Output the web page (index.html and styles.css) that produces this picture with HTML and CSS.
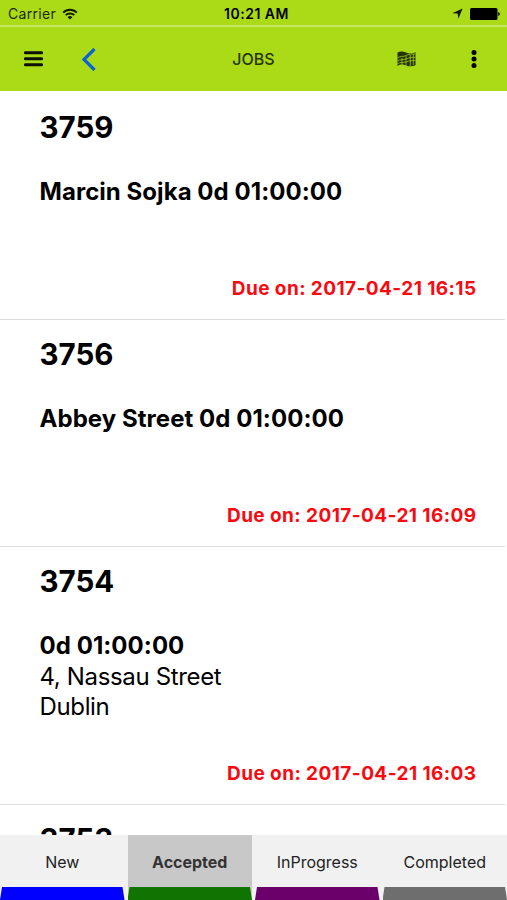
FILE: index.html
```html
<!DOCTYPE html>
<html lang="en">
<head>
    <meta charset="UTF-8">
    <meta name="viewport" content="width=device-width, initial-scale=1.0">
    <title>Jobs</title>
    <link rel="stylesheet" href="styles.css">
</head>
<body>
    <div class="statusBar">
        <div class="carrier">
            <span>Carrier</span>
            <svg width="16" height="12" viewBox="0 0 16 12" fill="none" stroke="#101800" stroke-width="1.9">
                <path d="M1.2 4.6a9.6 9.6 0 0 1 13.6 0M3.7 7.2a6.1 6.1 0 0 1 8.6 0"/>
                <path d="M8 11.6L5.6 9.2a3.4 3.4 0 0 1 4.8 0z" fill="#101800" stroke="none"/>
            </svg>
        </div>
        <span class="time">10:21 AM</span>
        <div class="battery">
            <svg width="11" height="11" viewBox="0 0 11 11"><path d="M10.6.4L6.4 10.7 5.6 5.6.3 5.3z" fill="#101800"/></svg>
            <svg width="30" height="12" viewBox="0 0 30 12"><rect width="27.5" height="12" rx="1.5"/><path d="M28.2 4q1.6.5 1.6 2t-1.6 2z"/></svg>
        </div>
    </div>
    <header class="header">
        <svg class="menuIcon" width="19" height="16" viewBox="0 0 19 16"><path d="M1.3 1.8h16.4M1.3 7.8h16.4M1.3 13.8h16.4" stroke="#0c1200" stroke-width="2.9" stroke-linecap="round"/></svg>
        <svg class="backIcon" width="16" height="24" viewBox="0 0 16 24"><path d="M13.5 2L3 12.5 13.5 23" fill="none" stroke="#0a63d6" stroke-width="3.2"/></svg>
        <h1 class="title">JOBS</h1>
        <svg class="mapIcon" width="19" height="16" viewBox="0 0 19 16">
            <path d="M.5 1.6C3 .2 6 .2 9 1.6s6.2 1.4 9.5-.4v13c-3.2 1.5-6.5 1.5-9.5.2s-6-1.3-8.500.6z" fill="#27350a"/>
            <path d="M.5 6.8c3-1.800 5.500-.8 8.500-2.300S14.500 3.200 18.500 3M.5 9.800c3-1.600 5.500-.6 9-2s5-1.600 9-1.400M.5 12.600c3-1.700 5.500-.6 9-1.800s5-1.400 9-1.200M5 7v7M9 5v10M13.300 4v11M16.300 3v11" fill="none" stroke="#aadb16" stroke-width=".7"/>
        </svg>
        <svg class="moreIcon" width="6" height="18" viewBox="0 0 6 18"><circle cx="3" cy="2.6" r="2.5"/><circle cx="3" cy="9" r="2.5"/><circle cx="3" cy="15.4" r="2.5"/></svg>
    </header>
    <main class="jobList">
        <section class="job">
            <h2 class="jobNum">3759</h2>
            <div class="detail"><b>Marcin Sojka 0d 01:00:00</b></div>
            <p class="due">Due on: 2017-04-21 16:15</p>
        </section>
        <section class="job">
            <h2 class="jobNum">3756</h2>
            <div class="detail"><b>Abbey Street 0d 01:00:00</b></div>
            <p class="due">Due on: 2017-04-21 16:09</p>
        </section>
        <section class="job">
            <h2 class="jobNum">3754</h2>
            <div class="detail">
                <b>0d 01:00:00</b>
                <p>4, Nassau Street</p>
                <p>Dublin</p>
            </div>
            <p class="due">Due on: 2017-04-21 16:03</p>
        </section>
        <section class="job">
            <h2 class="jobNum">3753</h2>
        </section>
    </main>
    <nav class="tabs">
        <div class="tab new">New</div>
        <div class="tab accepted active">Accepted</div>
        <div class="tab inProgress">InProgress</div>
        <div class="tab completed">Completed</div>
    </nav>
</body>
</html>
```
FILE: styles.css
```css
*{
    margin: 0;
    padding: 0;
    box-sizing: border-box;
}
body{
    display: flex;
    flex-direction: column;
    height: 900px;
    overflow: hidden;
    background-color: #fff;
    color: #000;
    font-family: Inter, "Liberation Sans", sans-serif;
}
svg{
    display: block;
    flex: none;
}
.statusBar{
    display: grid;
    grid-template-columns: 1fr auto 1fr;
    align-items: center;
    flex: none;
    height: 27px;
    padding: 2px 7px 0 8px;
    background-color: #aadb16;
    border-bottom: 2px solid #c8e76a;
    font-size: 14px;
}
.carrier{
    display: flex;
    align-items: center;
    gap: 6px;
    color: #1d2805;
    letter-spacing: .3px;
}
.time{
    padding-left: 5px;
    font-weight: 600;
    letter-spacing: .5px;
}
.battery{
    display: flex;
    align-items: center;
    justify-content: flex-end;
    gap: 7px;
}
.header{
    display: flex;
    align-items: center;
    flex: none;
    height: 64px;
    padding: 0 30px 0 24px;
    background-color: #aadb16;
}
.backIcon{
    margin-left: 38px;
}
.title{
    flex: 1;
    padding-left: 13px;
    color: #27350a;
    font-size: 16px;
    font-weight: 500;
    text-align: center;
}
.moreIcon{
    margin-left: 55px;
}
.jobList{
    flex: 1;
    min-height: 0;
    padding-top: 1.6px;
    overflow: hidden;
}
.job{
    margin-right: 2px;
    padding: 17px 28.5px 18.3px 39.5px;
    border-bottom: 1px solid #ddd;
}
.jobNum{
    font-size: 29.5px;
    font-weight: 700;
    line-height: 35px;
}
.detail{
    min-height: 61px;
    margin-top: 32px;
    font-size: 24px;
    line-height: 30.5px;
    letter-spacing: -.35px;
}
.detail b{
    font-weight: 700;
    letter-spacing: .05px;
}
.due{
    margin-top: 38px;
    color: #fa0a10;
    font-size: 19px;
    font-weight: 700;
    line-height: 25px;
    letter-spacing: .42px;
    text-align: right;
}
.tabs{
    display: flex;
    flex: none;
    gap: 3px;
    height: 65px;
    background-color: #f1f1f1;
}
.tab{
    display: flex;
    flex: 1;
    flex-direction: column;
    color: #222;
    font-size: 16px;
    line-height: 54px;
    text-align: center;
}
.tab::after{
    content: "";
    height: 13px;
    margin-top: -2px;
    background-color: currentColor;
    clip-path: polygon(2px 0, calc(100% - 2px) 0, 100% 100%, 0 100%);
}
.active{
    background-color: #c8c8c8;
    color: #333;
    font-weight: 700;
}
.new::after{
    background-color: #00f;
}
.accepted::after{
    background-color: #107400;
}
.inProgress::after{
    background-color: #6b006b;
}
.completed::after{
    background-color: #6e6e6e;
}
```
